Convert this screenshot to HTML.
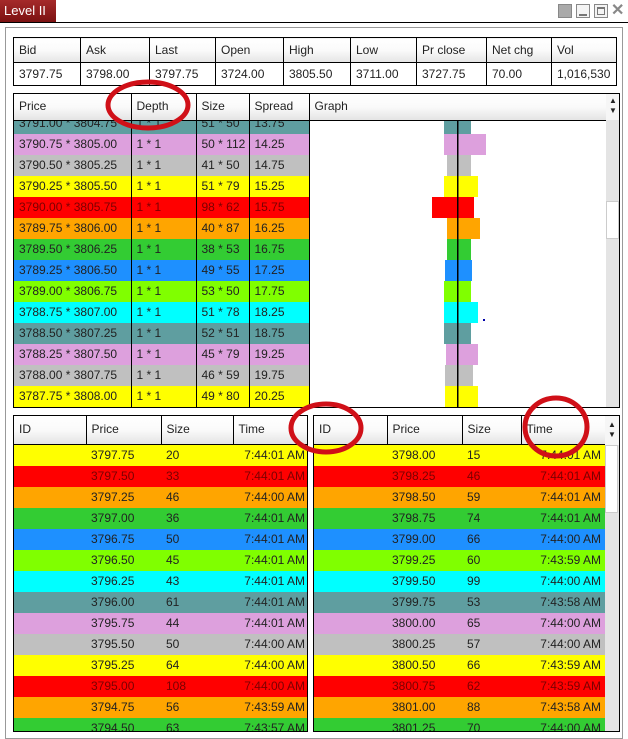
<!DOCTYPE html>
<html><head><meta charset="utf-8"><style>
*{margin:0;padding:0;box-sizing:border-box}
body{width:628px;height:738px;background:#fff;position:relative;overflow:hidden;font-family:"Liberation Sans",Arial,sans-serif;font-size:12px;color:#222}
.abs{position:absolute}
table{border-collapse:collapse;table-layout:fixed}
td{white-space:nowrap;overflow:hidden;padding:0 0 0 5px;height:21px;line-height:21px}
.hd td{background:linear-gradient(#fff,#fafafa 50%,#e4e4e4);border-right:1px solid #000}
.y{background:#ffff00}.r{background:#ff0000;color:#7a0000}.o{background:#ffa500}.g{background:#33cc33}.b{background:#1e90ff}.l{background:#80ff00}.c{background:#00ffff}.t{background:#5f9ea0}.p{background:#dda0dd}.s{background:#c0c0c0}
.dt td{border-right:1px solid #000}
.bt td.tm{text-align:right;padding-right:4px}
</style></head><body>
<div class="abs" style="left:0;top:0;width:56px;height:23px;background:linear-gradient(#a52a2a,#7a1010);color:#fff;font-size:13px;line-height:22px;padding-left:4px">Level II</div>
<div class="abs" style="left:0;top:22px;width:628px;height:1px;background:#000"></div>
<div class="abs" style="left:558px;top:4px;width:14px;height:14px;background:#aaa;border:1px solid #888"></div>
<div class="abs" style="left:576px;top:4px;width:14px;height:14px;border:1px solid #888;background:#f4f4f4"><div style="position:absolute;left:2px;top:9px;width:8px;height:2px;background:#777"></div></div>
<div class="abs" style="left:594px;top:4px;width:14px;height:14px;border:1px solid #888;background:#f4f4f4"><div style="position:absolute;left:2px;top:2px;width:8px;height:8px;border:1px solid #777;border-top-width:2px"></div></div>
<div class="abs" style="left:611px;top:2px;width:16px;height:18px;color:#888;font-size:16px;font-weight:bold;line-height:18px">✕</div>
<div class="abs" style="left:5px;top:27px;width:618px;height:712px;border:1px solid #999"></div>

<table class="abs" style="left:13px;top:37px;width:604px;border:1px solid #000">
<colgroup><col style="width:67px"><col style="width:69px"><col style="width:66px"><col style="width:68px"><col style="width:67px"><col style="width:66px"><col style="width:70px"><col style="width:65px"><col></colgroup>
<tr class="hd"><td style="height:25px">Bid</td><td>Ask</td><td>Last</td><td>Open</td><td>High</td><td>Low</td><td>Pr close</td><td>Net chg</td><td>Vol</td></tr>
<tr style="border-top:1px solid #000"><td style="border-right:1px solid #000;height:23px">3797.75</td><td style="border-right:1px solid #000">3798.00</td><td style="border-right:1px solid #000">3797.75</td><td style="border-right:1px solid #000">3724.00</td><td style="border-right:1px solid #000">3805.50</td><td style="border-right:1px solid #000">3711.00</td><td style="border-right:1px solid #000">3727.75</td><td style="border-right:1px solid #000">70.00</td><td>1,016,530</td></tr>
</table>

<div class="abs" style="left:13px;top:93px;width:607px;height:315px;border:1px solid #000;overflow:hidden">
<div class="abs" style="left:0;top:19px;width:295px;height:300px">
<table class="dt" style="width:295px">
<colgroup><col style="width:117px"><col style="width:65px"><col style="width:53px"><col style="width:60px"></colgroup>
<tr class="t"><td>3791.00 * 3804.75</td><td>1 * 1</td><td>51 * 50</td><td>13.75</td></tr>
<tr class="p"><td>3790.75 * 3805.00</td><td>1 * 1</td><td>50 * 112</td><td>14.25</td></tr>
<tr class="s"><td>3790.50 * 3805.25</td><td>1 * 1</td><td>41 * 50</td><td>14.75</td></tr>
<tr class="y"><td>3790.25 * 3805.50</td><td>1 * 1</td><td>51 * 79</td><td>15.25</td></tr>
<tr class="r"><td>3790.00 * 3805.75</td><td>1 * 1</td><td>98 * 62</td><td>15.75</td></tr>
<tr class="o"><td>3789.75 * 3806.00</td><td>1 * 1</td><td>40 * 87</td><td>16.25</td></tr>
<tr class="g"><td>3789.50 * 3806.25</td><td>1 * 1</td><td>38 * 53</td><td>16.75</td></tr>
<tr class="b"><td>3789.25 * 3806.50</td><td>1 * 1</td><td>49 * 55</td><td>17.25</td></tr>
<tr class="l"><td>3789.00 * 3806.75</td><td>1 * 1</td><td>53 * 50</td><td>17.75</td></tr>
<tr class="c"><td>3788.75 * 3807.00</td><td>1 * 1</td><td>51 * 78</td><td>18.25</td></tr>
<tr class="t"><td>3788.50 * 3807.25</td><td>1 * 1</td><td>52 * 51</td><td>18.75</td></tr>
<tr class="p"><td>3788.25 * 3807.50</td><td>1 * 1</td><td>45 * 79</td><td>19.25</td></tr>
<tr class="s"><td>3788.00 * 3807.75</td><td>1 * 1</td><td>46 * 59</td><td>19.75</td></tr>
<tr class="y"><td>3787.75 * 3808.00</td><td>1 * 1</td><td>49 * 80</td><td>20.25</td></tr>
<tr class="r"><td></td><td></td><td></td><td></td></tr>
</table></div>
<svg class="abs" style="left:0;top:0" width="607" height="315">
<g transform="translate(-13,-93)">
<rect x="443" y="112" width="27" height="21" fill="#5f9ea0"/>
<rect x="443" y="133" width="42" height="21" fill="#dda0dd"/>
<rect x="446" y="154" width="24" height="21" fill="#c0c0c0"/>
<rect x="443" y="175" width="34" height="21" fill="#ffff00"/>
<rect x="431" y="196" width="42" height="21" fill="#ff0000"/>
<rect x="446" y="217" width="33" height="21" fill="#ffa500"/>
<rect x="446" y="238" width="24" height="21" fill="#33cc33"/>
<rect x="444" y="259" width="27" height="21" fill="#1e90ff"/>
<rect x="443" y="280" width="27" height="21" fill="#80ff00"/>
<rect x="443" y="301" width="34" height="21" fill="#00ffff"/>
<rect x="443" y="322" width="27" height="21" fill="#5f9ea0"/>
<rect x="445" y="343" width="32" height="21" fill="#dda0dd"/>
<rect x="444" y="364" width="28" height="21" fill="#c0c0c0"/>
<rect x="444" y="385" width="33" height="21" fill="#ffff00"/>
<rect x="443" y="406" width="26" height="3" fill="#cc2200"/>
<rect x="456" y="112" width="1.5" height="300" fill="#000"/>
<rect x="482" y="318" width="2" height="2" fill="#00a"/>
</g></svg>
<table class="abs" style="left:0;top:0;width:605px">
<colgroup><col style="width:117px"><col style="width:65px"><col style="width:53px"><col style="width:60px"><col></colgroup>
<tr class="hd"><td style="height:26px;border-bottom:1px solid #000">Price</td><td style="border-bottom:1px solid #000">Depth</td><td style="border-bottom:1px solid #000">Size</td><td style="border-bottom:1px solid #000">Spread</td><td style="border-bottom:1px solid #000;border-right:0">Graph</td></tr>
</table>
<div class="abs" style="left:592px;top:0;width:14px;height:315px;background:#e4e4e4"></div>
<div class="abs" style="left:592px;top:0;width:14px;height:26px;background:#f6f6f6;font-size:8px;line-height:10px;text-align:center;padding-top:2px">▲<br>▼</div>
<div class="abs" style="left:592px;top:107px;width:13px;height:38px;background:#fff;border:1px solid #ccc"></div>
</div>

<div class="abs" style="left:13px;top:415px;width:295px;height:317px;border:1px solid #000;overflow:hidden">
<table class="bt" style="width:295px">
<colgroup><col style="width:72px"><col style="width:75px"><col style="width:72px"><col></colgroup>
<tr class="hd"><td style="height:28px;border-bottom:1px solid #000">ID</td><td style="border-bottom:1px solid #000">Price</td><td style="border-bottom:1px solid #000">Size</td><td style="border-bottom:1px solid #000;border-right:0">Time</td></tr>
<tr class="y"><td></td><td>3797.75</td><td>20</td><td class="tm">7:44:01 AM</td></tr>
<tr class="r"><td></td><td>3797.50</td><td>33</td><td class="tm">7:44:01 AM</td></tr>
<tr class="o"><td></td><td>3797.25</td><td>46</td><td class="tm">7:44:00 AM</td></tr>
<tr class="g"><td></td><td>3797.00</td><td>36</td><td class="tm">7:44:01 AM</td></tr>
<tr class="b"><td></td><td>3796.75</td><td>50</td><td class="tm">7:44:01 AM</td></tr>
<tr class="l"><td></td><td>3796.50</td><td>45</td><td class="tm">7:44:01 AM</td></tr>
<tr class="c"><td></td><td>3796.25</td><td>43</td><td class="tm">7:44:01 AM</td></tr>
<tr class="t"><td></td><td>3796.00</td><td>61</td><td class="tm">7:44:01 AM</td></tr>
<tr class="p"><td></td><td>3795.75</td><td>44</td><td class="tm">7:44:01 AM</td></tr>
<tr class="s"><td></td><td>3795.50</td><td>50</td><td class="tm">7:44:00 AM</td></tr>
<tr class="y"><td></td><td>3795.25</td><td>64</td><td class="tm">7:44:00 AM</td></tr>
<tr class="r"><td></td><td>3795.00</td><td>108</td><td class="tm">7:44:00 AM</td></tr>
<tr class="o"><td></td><td>3794.75</td><td>56</td><td class="tm">7:43:59 AM</td></tr>
<tr class="g"><td></td><td>3794.50</td><td>63</td><td class="tm">7:43:57 AM</td></tr>
</table></div>

<div class="abs" style="left:313px;top:415px;width:307px;height:317px;border:1px solid #000;overflow:hidden">
<table class="bt" style="width:291px">
<colgroup><col style="width:73px"><col style="width:75px"><col style="width:59px"><col></colgroup>
<tr class="hd"><td style="height:28px;border-bottom:1px solid #000">ID</td><td style="border-bottom:1px solid #000">Price</td><td style="border-bottom:1px solid #000">Size</td><td style="border-bottom:1px solid #000;border-right:0">Time</td></tr>
<tr class="y"><td></td><td>3798.00</td><td>15</td><td class="tm">7:44:01 AM</td></tr>
<tr class="r"><td></td><td>3798.25</td><td>46</td><td class="tm">7:44:01 AM</td></tr>
<tr class="o"><td></td><td>3798.50</td><td>59</td><td class="tm">7:44:01 AM</td></tr>
<tr class="g"><td></td><td>3798.75</td><td>74</td><td class="tm">7:44:01 AM</td></tr>
<tr class="b"><td></td><td>3799.00</td><td>66</td><td class="tm">7:44:00 AM</td></tr>
<tr class="l"><td></td><td>3799.25</td><td>60</td><td class="tm">7:43:59 AM</td></tr>
<tr class="c"><td></td><td>3799.50</td><td>99</td><td class="tm">7:44:00 AM</td></tr>
<tr class="t"><td></td><td>3799.75</td><td>53</td><td class="tm">7:43:58 AM</td></tr>
<tr class="p"><td></td><td>3800.00</td><td>65</td><td class="tm">7:44:00 AM</td></tr>
<tr class="s"><td></td><td>3800.25</td><td>57</td><td class="tm">7:44:00 AM</td></tr>
<tr class="y"><td></td><td>3800.50</td><td>66</td><td class="tm">7:43:59 AM</td></tr>
<tr class="r"><td></td><td>3800.75</td><td>62</td><td class="tm">7:43:59 AM</td></tr>
<tr class="o"><td></td><td>3801.00</td><td>88</td><td class="tm">7:43:58 AM</td></tr>
<tr class="g"><td></td><td>3801.25</td><td>70</td><td class="tm">7:44:00 AM</td></tr>
</table>
<div class="abs" style="left:291px;top:0;width:14px;height:317px;background:#e4e4e4"></div>
<div class="abs" style="left:291px;top:0;width:14px;height:29px;background:#f6f6f6;font-size:8px;line-height:10px;text-align:center;padding-top:4px">▲<br>▼</div>
<div class="abs" style="left:291px;top:29px;width:13px;height:68px;background:#fff;border:1px solid #ccc"></div>
</div>

<svg class="abs" style="left:0;top:0" width="628" height="738">
<ellipse cx="148" cy="105" rx="40" ry="23" fill="none" stroke="#d01018" stroke-width="5"/>
<ellipse cx="326" cy="428" rx="35" ry="24" fill="none" stroke="#d01018" stroke-width="5"/>
<ellipse cx="556" cy="427" rx="31" ry="29" fill="none" stroke="#d01018" stroke-width="5"/>
</svg>
</body></html>
